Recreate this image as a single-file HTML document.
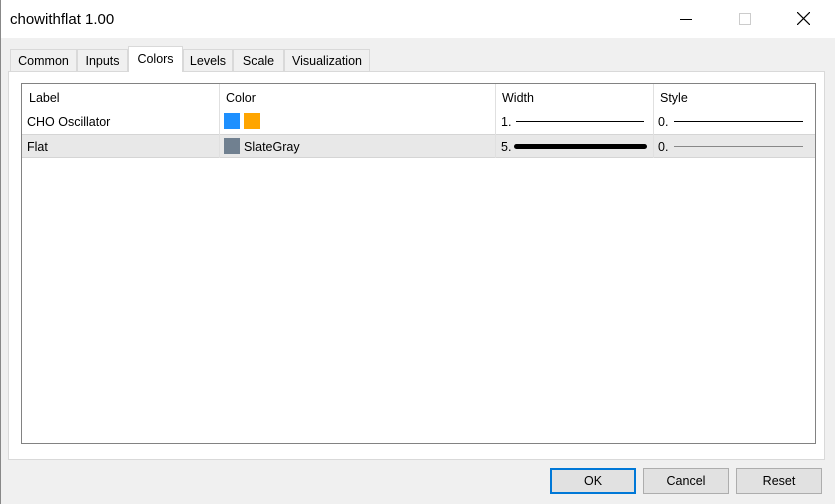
<!DOCTYPE html><html><head><style>
body{margin:0;width:835px;height:504px;background:#f0f0f0;font-family:"Liberation Sans",sans-serif;font-size:12.5px;color:#000;position:relative;overflow:hidden}
.a{position:absolute}
.tab{position:absolute;top:49px;height:22px;border:1px solid #d9d9d9;border-bottom:none;background:#f0f0f0;text-align:center;line-height:23px;box-sizing:border-box}
.btn{position:absolute;top:468px;height:26px;width:86px;background:#e1e1e1;border:1px solid #adadad;box-sizing:border-box;text-align:center;line-height:25px}
.ln{position:absolute;background:#000}
</style></head><body>
<div class="a" style="left:0;top:0;width:835px;height:38px;background:#fff"></div>
<div class="a" style="left:0;top:0;width:1px;height:504px;background:#888"></div>
<div class="a" style="left:10px;top:11px;font-size:15px">chowithflat 1.00</div>
<div class="a" style="left:680px;top:19px;width:12px;height:1px;background:#000"></div>
<div class="a" style="left:739px;top:13px;width:10px;height:10px;border:1px solid #ccc"></div>
<svg class="a" style="left:797px;top:12px" width="13" height="13"><path d="M0 0L13 13M13 0L0 13" stroke="#000" stroke-width="1.2"/></svg>
<div class="a" style="left:8px;top:71px;width:817px;height:389px;background:#fff;border:1px solid #d9d9d9;box-sizing:border-box"></div>
<div class="tab" style="left:10px;width:67px">Common</div>
<div class="tab" style="left:77px;width:51px">Inputs</div>
<div class="tab" style="left:128px;top:46px;height:26px;width:55px;background:#fff;line-height:25px">Colors</div>
<div class="tab" style="left:183px;width:50px">Levels</div>
<div class="tab" style="left:233px;width:51px">Scale</div>
<div class="tab" style="left:284px;width:86px">Visualization</div>
<div class="a" style="left:21px;top:83px;width:795px;height:361px;border:1px solid #828282;box-sizing:border-box;background:#fff"></div>
<div class="a" style="left:22px;top:134px;width:793px;height:24px;background:#e8e8e8;border-top:1px solid #d5d5d5;border-bottom:1px solid #d5d5d5;box-sizing:border-box"></div>
<div class="a" style="left:219px;top:84px;width:1px;height:74px;background:#e0e0e0"></div>
<div class="a" style="left:495px;top:84px;width:1px;height:74px;background:#e0e0e0"></div>
<div class="a" style="left:653px;top:84px;width:1px;height:74px;background:#e0e0e0"></div>
<div class="a" style="left:29px;top:91px">Label</div>
<div class="a" style="left:226px;top:91px">Color</div>
<div class="a" style="left:502px;top:91px">Width</div>
<div class="a" style="left:660px;top:91px">Style</div>
<div class="a" style="left:27px;top:115px">CHO Oscillator</div>
<div class="a" style="left:224px;top:113px;width:16px;height:16px;background:#1e90ff"></div>
<div class="a" style="left:244px;top:113px;width:16px;height:16px;background:#ffa500"></div>
<div class="a" style="left:501px;top:115px">1.</div>
<div class="ln" style="left:516px;top:121px;width:128px;height:1px"></div>
<div class="a" style="left:658px;top:115px">0.</div>
<div class="ln" style="left:674px;top:121px;width:129px;height:1px"></div>
<div class="a" style="left:27px;top:140px">Flat</div>
<div class="a" style="left:224px;top:138px;width:16px;height:16px;background:#708090"></div>
<div class="a" style="left:244px;top:140px">SlateGray</div>
<div class="a" style="left:501px;top:140px">5.</div>
<div class="ln" style="left:514px;top:144px;width:133px;height:5px;border-radius:3px"></div>
<div class="a" style="left:658px;top:140px">0.</div>
<div class="ln" style="left:674px;top:146px;width:129px;height:1px;background:#888"></div>
<div class="btn" style="left:550px;border:2px solid #0078d7;line-height:23px">OK</div>
<div class="btn" style="left:643px">Cancel</div>
<div class="btn" style="left:736px">Reset</div>
</body></html>
